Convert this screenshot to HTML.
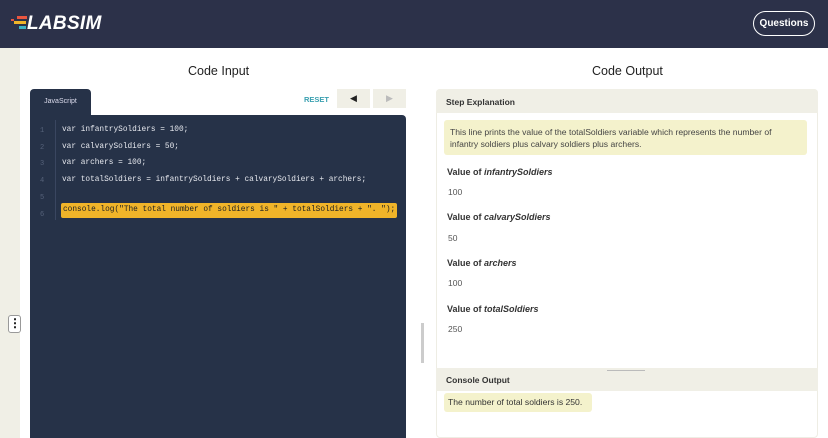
<!DOCTYPE html><html><head><style>
*{margin:0;padding:0;box-sizing:border-box}
body{width:828px;height:438px;overflow:hidden;background:#fff;font-family:"Liberation Sans",sans-serif;position:relative}
.a{position:absolute}
.hdr{left:0;top:0;width:828px;height:48px;background:#2c3149}
.code{font-family:"Liberation Mono",monospace;font-size:7.8px;color:#e6e8ee}
.ln{font-family:"Liberation Mono",monospace;font-size:7px;color:#56627a}
.lab{font-size:9px;font-weight:bold;color:#333}
.val{font-size:8.5px;color:#555}
</style></head><body>
<div class="a hdr"></div>
<div class="a" style="left:11px;top:19px;width:3px;height:2px;background:#e9553f"></div>
<div class="a" style="left:17px;top:16px;width:10px;height:3px;background:#e9553f"></div>
<div class="a" style="left:14px;top:21px;width:12px;height:3px;background:#f0b429"></div>
<div class="a" style="left:19px;top:26px;width:7px;height:3px;background:#3bb3c3"></div>
<div class="a" style="left:27px;top:13px;font-size:19px;font-weight:bold;font-style:italic;color:#fff;letter-spacing:0.3px">LABSIM</div>
<div class="a" style="left:753px;top:11px;width:62px;height:25px;border:1px solid #fff;border-radius:13px;color:#fff;font-size:10px;font-weight:bold;text-align:center;line-height:23px">Questions</div>
<div class="a" style="left:0;top:48px;width:20px;height:390px;background:#f0efe6"></div>
<div class="a" style="left:8px;top:315px;width:13px;height:18px;border:1px solid #999;border-radius:3px;background:#fff;font-size:12px;font-weight:bold;line-height:14px;text-align:center">⋮</div>
<div class="a" style="left:188px;top:64px;font-size:12.5px;color:#222">Code Input</div>
<div class="a" style="left:592px;top:64px;font-size:12.5px;color:#222">Code Output</div>
<div class="a" style="left:30px;top:89px;width:61px;height:28px;background:#263248;border-radius:4px 4px 0 0;color:#dde;font-size:7px;text-align:center;line-height:26px">JavaScript</div>
<div class="a" style="left:304px;top:95px;font-size:7.5px;font-weight:bold;color:#3aa0b0">RESET</div>
<div class="a" style="left:337px;top:89px;width:33px;height:19px;background:#f0efe6;font-size:9px;text-align:center;line-height:19px;color:#222">◀</div>
<div class="a" style="left:373px;top:89px;width:33px;height:19px;background:#f0efe6;font-size:9px;text-align:center;line-height:19px;color:#bbb">▶</div>
<div class="a" style="left:30px;top:115px;width:376px;height:323px;background:#263248;border-radius:0 4px 0 0"></div>
<div class="a" style="left:55px;top:120px;width:1px;height:100px;background:#3a4660"></div>
<div class="a ln" style="left:40px;top:123px;line-height:16.7px">1<br>2<br>3<br>4<br>5<br>6</div>
<div class="a code" style="left:62px;top:122px;line-height:16.7px;white-space:pre">var infantrySoldiers = 100;
var calvarySoldiers = 50;
var archers = 100;
var totalSoldiers = infantrySoldiers + calvarySoldiers + archers;</div>
<div class="a code" style="left:61px;top:203px;width:336px;height:15px;background:#f0b429;border-radius:2px;color:#222;line-height:15px;padding-left:2px;white-space:pre">console.log("The total number of soldiers is " + totalSoldiers + ". ");</div>
<div class="a" style="left:421px;top:323px;width:3px;height:40px;background:#ccc"></div>
<div class="a" style="left:436px;top:89px;width:382px;height:349px;border:1px solid #eeede4;border-radius:4px"></div>
<div class="a" style="left:436px;top:89px;width:382px;height:24px;background:#f0efe6;border-radius:4px 4px 0 0"></div>
<div class="a lab" style="left:446px;top:97px;font-size:8.5px">Step Explanation</div>
<div class="a" style="left:444px;top:120px;width:363px;height:35px;background:#f4f2cc;border-radius:3px;font-size:8.6px;color:#444;padding:6px 6px;line-height:12px">This line prints the value of the totalSoldiers variable which represents the number of infantry soldiers plus calvary soldiers plus archers.</div>
<div class="a lab" style="left:447px;top:167px">Value of <i>infantrySoldiers</i></div>
<div class="a val" style="left:448px;top:187px">100</div>
<div class="a lab" style="left:447px;top:212px">Value of <i>calvarySoldiers</i></div>
<div class="a val" style="left:448px;top:233px">50</div>
<div class="a lab" style="left:447px;top:258px">Value of <i>archers</i></div>
<div class="a val" style="left:448px;top:278px">100</div>
<div class="a lab" style="left:447px;top:304px">Value of <i>totalSoldiers</i></div>
<div class="a val" style="left:448px;top:324px">250</div>
<div class="a" style="left:436px;top:368px;width:382px;height:23px;background:#f0efe6"></div>
<div class="a" style="left:607px;top:370px;width:38px;height:1px;background:#bbb"></div>
<div class="a lab" style="left:446px;top:375px;font-size:8.5px">Console Output</div>
<div class="a" style="left:444px;top:393px;width:148px;height:19px;background:#f4f2cc;border-radius:3px;font-size:8.6px;color:#333;line-height:19px;padding-left:4px">The number of total soldiers is 250.</div>
</body></html>
